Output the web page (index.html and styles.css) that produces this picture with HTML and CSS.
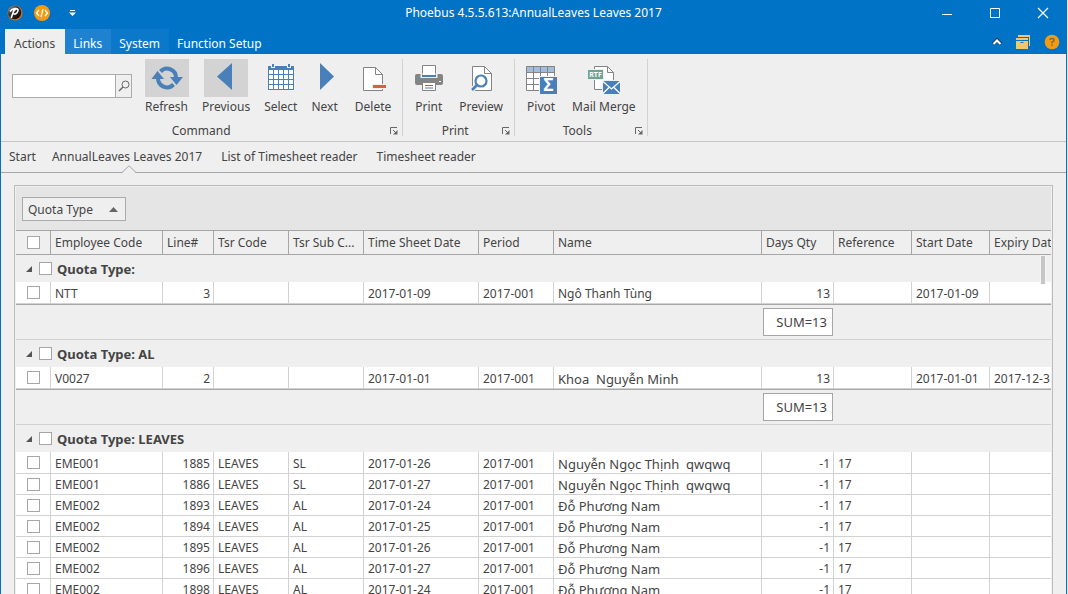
FILE: index.html
```html
<!DOCTYPE html>
<html lang="en">
<head>
<meta charset="utf-8">
<title>Phoebus 4.5.5.613:AnnualLeaves Leaves 2017</title>
<link rel="stylesheet" href="styles.css">
</head>
<body>
<div class="window">
  <header class="titlebar">
    <div class="quick">
      <svg width="16" height="16" viewBox="0 0 16 16" aria-hidden="true"><defs><linearGradient id="ball" x1="0" y1="0" x2="1" y2="1"><stop offset="0" stop-color="#aaa"/><stop offset=".4" stop-color="#333"/><stop offset=".8" stop-color="#111"/></linearGradient></defs><circle cx="8" cy="8" r="7.500" fill="#d56a1c"/><circle cx="7.500" cy="7.500" r="6.700" fill="url(#ball)"/><path d="M3 6.500Q5 4 7.500 3.600L4.200 13M6.200 8.500Q8 10 10 7.700Q12.400 4.200 9.500 3.600Q8 4 7.200 6" fill="none" stroke="#fff" stroke-width="1.600"/></svg>
      <svg width="16" height="16" viewBox="0 0 16 16" aria-hidden="true"><circle cx="8" cy="8" r="8" fill="#f39c12"/><path d="M5 5L2.500 8L5 11M11 5L13.500 8L11 11M9 4L7 12" fill="none" stroke="#fff" stroke-width="1.200"/></svg>
      <button class="plain" aria-label="Customize toolbar"><svg width="7" height="6" viewBox="0 0 7 6"><path d="M1 0h5v1h-5zM0 2.500h7L3.500 6z" fill="#fff"/></svg></button>
    </div>
    <h1 class="title">Phoebus 4.5.5.613:AnnualLeaves Leaves 2017</h1>
    <div class="winbtns">
      <button class="plain" aria-label="Minimize"><svg width="10" height="10" viewBox="0 0 10 10"><path d="M0 6.500h10" stroke="#fff"/></svg></button>
      <button class="plain" aria-label="Maximize"><svg width="10" height="10" viewBox="0 0 10 10"><path d="M.5.5h9v9h-9z" fill="none" stroke="#fff"/></svg></button>
      <button class="plain" aria-label="Close"><svg width="10" height="10" viewBox="0 0 10 10"><path d="M0 0L10 10M10 0L0 10" stroke="#fff" stroke-width="1.200"/></svg></button>
    </div>
  </header>
  <nav class="tabs">
    <button class="tab active">Actions</button>
    <button class="tab near">Links</button>
    <button class="tab far">System</button>
    <button class="tab">Function Setup</button>
    <div class="tabtools">
      <button class="plain" aria-label="Collapse ribbon"><svg width="10" height="8" viewBox="0 0 10 8"><path d="M1 6L5 2L9 6" fill="none" stroke="#1c3f63" stroke-width="3.500"/><path d="M1.500 6L5 2.500L8.500 6" fill="none" stroke="#fff" stroke-width="2"/></svg></button>
      <button class="plain" aria-label="Windows"><svg width="14" height="14" viewBox="0 0 14 14"><path d="M2 0h12v11h-1V2H2zM0 3h12v2H0zM0 6h12v8H0z" fill="#f2c572"/><path d="M4.500 7.500h3" stroke="#1979ca"/></svg></button>
      <button class="plain" aria-label="Help"><svg width="16" height="16" viewBox="0 0 16 16"><circle cx="8" cy="8" r="7.300" fill="#f39c12"/><path d="M6 6Q6 4.500 8 4.500T10 6.200Q10 7.200 8 8.200V9.500M8 10.500V12" fill="none" stroke="#8a6a3a" stroke-width="1.500"/></svg></button>
    </div>
  </nav>
  <section class="ribbon">
    <div class="group">
      <div class="cmds">
        <form class="search">
          <input type="text" aria-label="Search">
          <button type="button" aria-label="Find"><svg width="12" height="12" viewBox="0 0 12 12"><circle cx="7.500" cy="4.500" r="3.500" fill="none" stroke="#666"/><path d="M5 7L1 11" stroke="#666" stroke-width="1.400"/></svg></button>
        </form>
        <button class="cmd"><span class="ico lit"><svg width="32" height="32" viewBox="0 0 32 32"><g fill="none" stroke="#4a80ba" stroke-width="4"><path d="M9.500 9.500A9 9 0 0 1 25 16"/><path d="M22.500 22.500A9 9 0 0 1 7 16"/></g><path d="M.5 17L6.500 9L13 17zM19 15H32L25.500 23z" fill="#4a80ba"/></svg></span><span>Refresh</span></button>
        <button class="cmd"><span class="ico lit"><svg width="32" height="32" viewBox="0 0 32 32"><path d="M7 14.500L22 1V28z" fill="#4a80ba"/></svg></span><span>Previous</span></button>
        <button class="cmd"><span class="ico"><svg width="32" height="32" viewBox="0 0 32 32"><path d="M3 4h26v24H3z" fill="#4a80ba"/><path d="M4 8h4v4H4zM9 8h4v4H9zM14 8h4v4h-4zM19 8h4v4h-4zM24 8h4v4h-4zM4 13h4v4H4zM9 13h4v4H9zM14 13h4v4h-4zM19 13h4v4h-4zM24 13h4v4h-4zM4 18h4v4H4zM9 18h4v4H9zM14 18h4v4h-4zM19 18h4v4h-4zM24 18h4v4h-4zM4 23h4v4H4zM9 23h4v4H9zM14 23h4v4h-4zM19 23h4v4h-4zM24 23h4v4h-4z" fill="#fff"/><path d="M6 2h4v4H6zM22 2h4v4h-4z" fill="#efefef"/><path d="M7 2h2v3H7zM23 2h2v3h-2z" fill="#4a80ba"/></svg></span><span>Select</span></button>
        <button class="cmd"><span class="ico"><svg width="32" height="32" viewBox="0 0 32 32"><path d="M25 14.500L11 1V28z" fill="#4a80ba"/></svg></span><span>Next</span></button>
        <button class="cmd"><span class="ico"><svg width="32" height="32" viewBox="0 0 32 32"><path d="M6.500 5.500h12l7 7v16h-19z" fill="#fff" stroke="#848484"/><path d="M18.500 5.500v7h7" fill="none" stroke="#848484"/><path d="M15 22h15v5H15z" fill="#efefef"/><path d="M16 23h13v3H16z" fill="#d95f43"/></svg></span><span>Delete</span></button>
      </div>
      <div class="caption"><span>Command</span><button class="plain" aria-label="Command options"><svg class="launch" width="8" height="8" viewBox="0 0 8 8"><path d="M.5 7V.5H7M3 3L6 6" fill="none" stroke="#666"/><path d="M7.500 3v4.500H3z" fill="#666"/></svg></button></div>
    </div>
    <div class="group">
      <div class="cmds">
        <button class="cmd"><span class="ico"><svg width="32" height="32" viewBox="0 0 32 32"><rect x="2" y="12" width="28" height="11" rx="2" fill="#848484"/><path d="M9.500 3.500h13v11h-13z" fill="#fff" stroke="#848484"/><path d="M8.500 11v4h15v-4" fill="none" stroke="#efefef" stroke-width="2"/><path d="M9 14h14" stroke="#4a80ba" stroke-width="2"/><path d="M9.500 20.500h13v8h-13z" fill="#fff" stroke="#848484"/><path d="M12 23.500h8M12 26h8" stroke="#4a80ba"/><path d="M26 19h2v1h-2z" fill="#fff"/></svg></span><span>Print</span></button>
        <button class="cmd"><span class="ico"><svg width="32" height="32" viewBox="0 0 32 32"><path d="M7.500 4.500h12l7 7v17h-19z" fill="#fff" stroke="#848484"/><path d="M19.500 4.500v7h7" fill="none" stroke="#848484"/><path d="M12 23L6 29" stroke="#efefef" stroke-width="5"/><circle cx="16" cy="19" r="5.500" fill="#fff" stroke="#4a80ba" stroke-width="2.200"/><path d="M12 23L7 28" stroke="#4a80ba" stroke-width="2.500"/></svg></span><span>Preview</span></button>
      </div>
      <div class="caption"><span>Print</span><button class="plain" aria-label="Print options"><svg class="launch" width="8" height="8" viewBox="0 0 8 8"><path d="M.5 7V.5H7M3 3L6 6" fill="none" stroke="#666"/><path d="M7.500 3v4.500H3z" fill="#666"/></svg></button></div>
    </div>
    <div class="group">
      <div class="cmds">
        <button class="cmd"><span class="ico"><svg width="32" height="32" viewBox="0 0 32 32"><path d="M1.500 4.500h28v24h-28z" fill="#fff"/><path d="M1 4h29v6H1z" fill="#a2bcdb"/><path d="M1.500 4.500h28v24h-28zM1.500 10.500h28M1.500 16.500h28M1.500 22.500h28M8.500 4.500v24M15.500 4.500v24M22.500 4.500v12" fill="none" stroke="#848484"/><path d="M14 14h18v18H14z" fill="#efefef"/><path d="M15 15h17v17H15z" fill="#4a80ba"/><text class="sigma" x="23.500" y="29" text-anchor="middle">Σ</text></svg></span><span>Pivot</span></button>
        <button class="cmd"><span class="ico"><svg width="32" height="32" viewBox="0 0 32 32"><path d="M6.500 4.500h13l6 6v17h-19z" fill="#fff" stroke="#848484"/><path d="M19.500 4.500v6h6" fill="none" stroke="#848484"/><path d="M0 7h16v11H0z" fill="#efefef"/><path d="M0 8h15v9H0z" fill="#6fa392"/><text class="rtf" x="7.500" y="15" text-anchor="middle">RTF</text><path d="M14 18h18v14H14z" fill="#efefef"/><path d="M15 19h17v13H15z" fill="#4a80ba"/><path d="M15 19.500L23.500 27L32 19.500M15 31.500L21.500 25M32 31.500L25.500 25" fill="none" stroke="#fff" stroke-width="1.300"/></svg></span><span>Mail Merge</span></button>
      </div>
      <div class="caption"><span>Tools</span><button class="plain" aria-label="Tools options"><svg class="launch" width="8" height="8" viewBox="0 0 8 8"><path d="M.5 7V.5H7M3 3L6 6" fill="none" stroke="#666"/><path d="M7.500 3v4.500H3z" fill="#666"/></svg></button></div>
    </div>
  </section>
  <nav class="docs">
    <button class="doc">Start</button>
    <button class="doc current">AnnualLeaves Leaves 2017<svg class="notch" width="14" height="8" viewBox="0 0 14 8"><path d="M1 7h12v1H1z" fill="#efefef"/><path d="M0 7.500L7 .8L14 7.500" fill="#efefef" stroke="#a6a6a6"/></svg></button>
    <button class="doc">List of Timesheet reader</button>
    <button class="doc">Timesheet reader</button>
  </nav>
  <main class="workspace">
    <div class="panel">
      <div class="groupbar"><button class="sorter">Quota Type<svg width="9" height="5" viewBox="0 0 9 5"><path d="M0 5L4.500 0L9 5z" fill="#666"/></svg></button></div>
      <div class="scroller">
      <table class="grid">
        <colgroup><col class="w-check"><col class="w-emp"><col class="w-line"><col class="w-code"><col class="w-code"><col class="w-sheet"><col class="w-code"><col class="w-name"><col class="w-days"><col class="w-date"><col class="w-date"><col class="w-date"></colgroup>
        <thead><tr><th><input type="checkbox" aria-label="Select all"></th><th>Employee Code</th><th>Line#</th><th>Tsr Code</th><th>Tsr Sub C...</th><th>Time Sheet Date</th><th>Period</th><th>Name</th><th>Days Qty</th><th>Reference</th><th>Start Date</th><th>Expiry Date</th></tr></thead>
        <tbody>
          <tr class="band"><td colspan="12"><label><svg width="6" height="6" viewBox="0 0 6 6"><path d="M6 0V6H0z" fill="#555"/></svg><input type="checkbox">Quota Type:</label></td></tr>
          <tr class="first"><td><input type="checkbox" aria-label="Select row"></td><td>NTT</td><td class="num">3</td><td></td><td></td><td>2017-01-09</td><td>2017-001</td><td>Ngô Thanh Tùng</td><td class="num">13</td><td></td><td>2017-01-09</td><td></td></tr>
          <tr class="total"><td colspan="8"></td><td><div class="sum">SUM=13</div></td><td colspan="3"></td></tr>
        </tbody>
        <tbody>
          <tr class="band"><td colspan="12"><label><svg width="6" height="6" viewBox="0 0 6 6"><path d="M6 0V6H0z" fill="#555"/></svg><input type="checkbox">Quota Type: AL</label></td></tr>
          <tr class="first"><td><input type="checkbox" aria-label="Select row"></td><td>V0027</td><td class="num">2</td><td></td><td></td><td>2017-01-01</td><td>2017-001</td><td class="name">Khoa&nbsp; Nguyễn Minh</td><td class="num">13</td><td></td><td>2017-01-01</td><td>2017-12-31</td></tr>
          <tr class="total"><td colspan="8"></td><td><div class="sum">SUM=13</div></td><td colspan="3"></td></tr>
        </tbody>
        <tbody>
          <tr class="band"><td colspan="12"><label><svg width="6" height="6" viewBox="0 0 6 6"><path d="M6 0V6H0z" fill="#555"/></svg><input type="checkbox">Quota Type: LEAVES</label></td></tr>
          <tr class="first"><td><input type="checkbox" aria-label="Select row"></td><td>EME001</td><td class="num">1885</td><td>LEAVES</td><td>SL</td><td>2017-01-26</td><td>2017-001</td><td class="name">Nguyễn Ngọc Thịnh&nbsp; qwqwq</td><td class="num">-1</td><td>17</td><td></td><td></td></tr>
          <tr><td><input type="checkbox" aria-label="Select row"></td><td>EME001</td><td class="num">1886</td><td>LEAVES</td><td>SL</td><td>2017-01-27</td><td>2017-001</td><td class="name">Nguyễn Ngọc Thịnh&nbsp; qwqwq</td><td class="num">-1</td><td>17</td><td></td><td></td></tr>
          <tr><td><input type="checkbox" aria-label="Select row"></td><td>EME002</td><td class="num">1893</td><td>LEAVES</td><td>AL</td><td>2017-01-24</td><td>2017-001</td><td class="name">Đỗ Phương Nam</td><td class="num">-1</td><td>17</td><td></td><td></td></tr>
          <tr><td><input type="checkbox" aria-label="Select row"></td><td>EME002</td><td class="num">1894</td><td>LEAVES</td><td>AL</td><td>2017-01-25</td><td>2017-001</td><td class="name">Đỗ Phương Nam</td><td class="num">-1</td><td>17</td><td></td><td></td></tr>
          <tr><td><input type="checkbox" aria-label="Select row"></td><td>EME002</td><td class="num">1895</td><td>LEAVES</td><td>AL</td><td>2017-01-26</td><td>2017-001</td><td class="name">Đỗ Phương Nam</td><td class="num">-1</td><td>17</td><td></td><td></td></tr>
          <tr><td><input type="checkbox" aria-label="Select row"></td><td>EME002</td><td class="num">1896</td><td>LEAVES</td><td>AL</td><td>2017-01-27</td><td>2017-001</td><td class="name">Đỗ Phương Nam</td><td class="num">-1</td><td>17</td><td></td><td></td></tr>
          <tr><td><input type="checkbox" aria-label="Select row"></td><td>EME002</td><td class="num">1898</td><td>LEAVES</td><td>AL</td><td>2017-01-24</td><td>2017-001</td><td class="name">Đỗ Phương Nam</td><td class="num">-1</td><td>17</td><td></td><td></td></tr>
        </tbody>
      </table>
      <div class="thumb"></div>
      </div>
    </div>
  </main>
</div>
</body>
</html>
```
FILE: styles.css
```css
* { box-sizing: border-box; }
body { margin: 0; height: 100vh; overflow: hidden; background: #dcebf7; color: #444; font: 12px/16px "Noto Sans", sans-serif; }
button, input { font: inherit; color: inherit; margin: 0; padding: 0; }
button { border: 0; background: none; white-space: nowrap; }
svg { display: block; flex: none; overflow: visible; }
.window { display: flex; flex-direction: column; height: 100%; margin-right: 1px; border: solid #0173c7; border-width: 0 1px; background: #efefef; }
.titlebar { display: grid; grid-template-columns: 1fr auto 1fr; align-items: center; flex: none; height: 29px; padding-bottom: 3px; background: #0173c7; color: #fff; }
.quick { display: flex; align-items: center; gap: 11px; padding-left: 6px; }
.quick .plain { margin-left: 8px; }
.title { margin: 0; font: inherit; }
.winbtns { display: flex; justify-content: flex-end; gap: 38px; padding-right: 18px; }
.tabs { display: flex; flex: none; height: 25px; padding-left: 4px; background: #0173c7; color: #fff; }
.tab { padding: 4px 9px 0 8px; }
.active { background: #efefef; color: #444; padding: 4px 10px 0 9px; }
.near { background: #1f82d0; }
.far { background: #0c78ca; }
.tabtools { display: flex; align-items: center; gap: 14px; margin-left: auto; padding-right: 6px; }
.ribbon { display: flex; flex: none; height: 88px; padding-left: 6px; border-bottom: 1px solid #c6c6c6; }
.search { display: flex; height: 24px; width: 120px; margin: 15px 6px 0 0; border: 1px solid #ababab; }
.search input { flex: 1; min-width: 0; border: 0; background: #fff; }
.search button { display: flex; align-items: center; justify-content: center; width: 16px; border-left: 1px solid #ababab; }
.group { display: flex; flex-direction: column; height: 77px; margin-top: 5px; padding: 0 4px 0 5px; border-right: 1px solid #d2d2d2; }
.cmds { display: flex; }
.cmd { display: flex; flex-direction: column; align-items: center; padding: 0 7px; gap: 2px; }
.cmd:last-child { margin-left: 3px; }
.ico { display: flex; justify-content: center; width: 44px; height: 38px; margin: 0 -12px; padding-top: 3px; }
.lit { background: #d3d3d3; }
.caption { display: flex; align-items: center; justify-content: center; height: 16px; margin-top: 8px; }
.caption span { flex: 1; text-align: center; }
.sigma { font: bold 17px "Noto Sans", sans-serif; fill: #fff; }
.rtf { font: bold 7px "Noto Sans", sans-serif; fill: #fff; }
.docs { display: flex; flex: none; height: 31px; border-bottom: 1px solid #a6a6a6; }
.doc { position: relative; padding: 0 8px; }
.doc + .doc { padding-right: 11px; }
.notch { position: absolute; left: calc(50% - 7px); bottom: -1px; }
.workspace { display: flex; flex: 1; min-height: 0; padding: 12px 13px 0; }
.panel { display: flex; flex-direction: column; flex: 1; min-width: 0; border: 1px solid #bcbcbc; border-bottom: 0; padding: 1px 1px 0; overflow: hidden; }
.groupbar { flex: none; height: 43px; padding: 10px 6px; background: #e5e5e5; }
.sorter { display: flex; align-items: center; gap: 16px; height: 24px; padding: 1px 7px 0 5px; border: 1px solid #ababab; background: #efefef; }
.scroller { position: relative; flex: 1; min-height: 0; overflow: hidden; }
.thumb { position: absolute; top: 25px; right: 5px; width: 6px; height: 29px; border: solid #f6f6f6; border-width: 1px 1px 0; background: #c6c6c6; }
.grid { table-layout: fixed; width: 1052px; border-spacing: 0; }
.w-check { width: 35px; }
.w-emp { width: 112px; }
.w-line { width: 51px; }
.w-code { width: 75px; }
.w-sheet { width: 115px; }
.w-name { width: 208px; }
.w-days { width: 72px; }
.w-date { width: 78px; }
th, td { padding: 0 3px 0 4px; text-align: left; font-weight: 400; white-space: nowrap; overflow: hidden; }
th { height: 25px; border: solid #a6a6a6; border-width: 1px 1px 1px 0; }
td { height: 21px; padding-top: 2px; background: #fff; border: solid #d2d2d2; border-width: 0 1px 1px 0; }
.first td { height: 22px; padding-top: 3px; }
th:first-child, td:first-child { padding-left: 11px; }
tr td:first-child { padding-top: 0; }
input[type=checkbox] { appearance: none; display: block; width: 13px; height: 13px; border: 1px solid #a6a6a6; background: #fff; }
td.num { text-align: right; }
td.name { font-size: 13px; }
.band td { height: 27px; border: 0; padding-left: 10px; background: #efefef; font-size: 13px; font-weight: 700; }
.band label { display: flex; align-items: center; gap: 7px; }
.band input { margin-right: -2px; }
.total td { height: 36px; padding: 0 1px; border-width: 1px 0; border-top-color: #a6a6a6; background: #efefef; }
.sum { height: 28px; padding: 5px 5px 0 0; text-align: right; font-size: 13px; border: 1px solid #a6a6a6; background: #fff; }
```
